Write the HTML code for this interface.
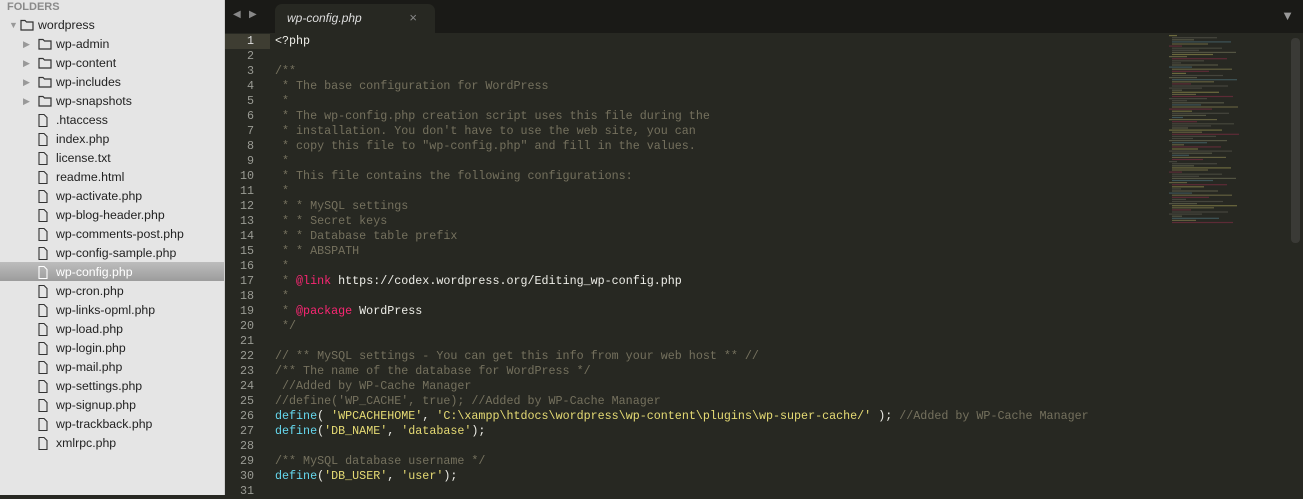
<!DOCTYPE html>
<html><head><meta charset="utf-8"><style>
*{margin:0;padding:0;box-sizing:border-box}
body{width:1303px;height:495px;overflow:hidden;background:#272822;font-family:"Liberation Sans",sans-serif;position:relative}
#side{position:absolute;left:0;top:0;width:225px;height:495px;background:#e5e5e5;border-right:1px solid #cfcfcf}
.hd{position:absolute;left:7px;top:0;font-size:11px;color:#8a8a8a;font-weight:bold;line-height:15px}
.row{position:absolute;left:0;width:224px;height:19px;line-height:19px;font-size:12.3px;color:#222}
.row.sel{background:linear-gradient(#bdbdbd,#9c9c9c);color:#fff}
.row span{position:absolute}
.tri{font-size:9px;color:#999}
#tabbar{position:absolute;left:225px;top:0;width:1078px;height:33px;background:#1a1a17}
#tab{position:absolute;left:50px;top:4px;width:160px;height:29px;background:#272822;border-radius:7px 7px 0 0;color:#ddd;font-style:italic;font-size:12px;line-height:28px;padding-left:12px}
#gut{position:absolute;left:225px;top:33px;width:45px;height:462px}
.ln{position:absolute;right:16px;width:40px;text-align:right;font:11.7px/15px "Liberation Mono",monospace;color:#9a9b94}
#code{position:absolute;left:275px;top:34px;font:11.7px/15px "Liberation Mono",monospace;color:#eeeee8;white-space:pre}
.c{color:#75715e}.k{color:#66d9ef}.s{color:#e6db74}.r{color:#f92672}
#mini{position:absolute;left:1165px;top:33px;width:125px;height:200px;opacity:.45}
#sb{position:absolute;left:1291px;top:38px;width:9px;height:205px;background:#3a3a36;border-radius:4px}
</style></head><body>
<div id="side">
<div class="hd">FOLDERS</div>
</div>
<div id="tabbar">
<span style="position:absolute;left:8px;top:9px;color:#888;font-size:10px">◀</span>
<span style="position:absolute;left:24px;top:9px;color:#888;font-size:10px">▶</span>
<div id="tab">wp-config.php<span style="position:absolute;right:18px;font-style:normal;color:#888;font-size:13px">×</span></div>
<span style="position:absolute;right:9px;top:8px;color:#999;font-size:13px">▼</span>
</div>
<div style="position:absolute;left:225px;top:34px;width:45px;height:15px;background:#3e3d32"></div>
<div id="gut"></div>
<div id="code"></div>
<svg id="mini" viewBox="0 0 125 200"></svg>
<div id="sb"></div>
<script>
var files=[["wordpress",0,2],["wp-admin",1,1],["wp-content",1,1],["wp-includes",1,1],["wp-snapshots",1,1],[".htaccess",1,0],["index.php",1,0],["license.txt",1,0],["readme.html",1,0],["wp-activate.php",1,0],["wp-blog-header.php",1,0],["wp-comments-post.php",1,0],["wp-config-sample.php",1,0],["wp-config.php",1,0],["wp-cron.php",1,0],["wp-links-opml.php",1,0],["wp-load.php",1,0],["wp-login.php",1,0],["wp-mail.php",1,0],["wp-settings.php",1,0],["wp-signup.php",1,0],["wp-trackback.php",1,0],["xmlrpc.php",1,0]];
var sd=document.getElementById('side'),h='';
files.forEach(function(f,i){var y=15+i*19,x=f[1]?38:20;
h+='<div class="row'+(f[0]=="wp-config.php"?' sel':'')+'" style="top:'+y+'px;line-height:20px">';
if(f[2]==2)h+='<span class="tri" style="left:9px">▼</span>';
if(f[2]==1)h+='<span class="tri" style="left:23px">▶</span>';
var ic=f[2]?'<svg width="14" height="12" viewBox="0 0 14 12"><path d="M1 1.5h4l1.5 1.5H13v8H1z" fill="none" stroke="#333" stroke-width="1.2"/></svg>':'<svg width="10" height="13" viewBox="0 0 10 13"><path d="M1 .5h5l3 3v9H1z" fill="none" stroke="'+(f[0]=="wp-config.php"?'#fff':'#333')+'" stroke-width="1.1"/></svg>';
h+='<span style="left:'+x+'px;top:4px;line-height:0">'+ic+'</span><span style="left:'+(x+18)+'px">'+f[0]+'</span></div>';});
sd.innerHTML+=h;
var g='';for(var n=1;n<=31;n++)g+='<div class="ln" style="top:'+((n-1)*15+1)+'px;'+(n==1?'color:#ddd':'')+'">'+n+'</div>';
document.getElementById('gut').innerHTML=g;
var L=['&lt;?php','','<span class="c">/**</span>','<span class="c"> * The base configuration for WordPress</span>','<span class="c"> *</span>','<span class="c"> * The wp-config.php creation script uses this file during the</span>','<span class="c"> * installation. You don\'t have to use the web site, you can</span>','<span class="c"> * copy this file to "wp-config.php" and fill in the values.</span>','<span class="c"> *</span>','<span class="c"> * This file contains the following configurations:</span>','<span class="c"> *</span>','<span class="c"> * * MySQL settings</span>','<span class="c"> * * Secret keys</span>','<span class="c"> * * Database table prefix</span>','<span class="c"> * * ABSPATH</span>','<span class="c"> *</span>','<span class="c"> * </span><span class="r">@link</span> https://codex.wordpress.org/Editing_wp-config.php','<span class="c"> *</span>','<span class="c"> * </span><span class="r">@package</span> WordPress','<span class="c"> */</span>','','<span class="c">// ** MySQL settings - You can get this info from your web host ** //</span>','<span class="c">/** The name of the database for WordPress */</span>','<span class="c"> //Added by WP-Cache Manager</span>','<span class="c">//define(\'WP_CACHE\', true); //Added by WP-Cache Manager</span>','<span class="k">define</span>( <span class="s">\'WPCACHEHOME\'</span>, <span class="s">\'C:\\xampp\\htdocs\\wordpress\\wp-content\\plugins\\wp-super-cache/\'</span> ); <span class="c">//Added by WP-Cache Manager</span>','<span class="k">define</span>(<span class="s">\'DB_NAME\'</span>, <span class="s">\'database\'</span>);','','<span class="c">/** MySQL database username */</span>','<span class="k">define</span>(<span class="s">\'DB_USER\'</span>, <span class="s">\'user\'</span>);',''];
document.getElementById('code').innerHTML=L.join('\n');
var m='',cols=['#6b6a5c','#6b6a5c','#8a8a6a','#5a8a9a','#a8a060','#a03050'];
for(var i=0;i<90;i++){var w=(i*37%60)+8;var c=cols[i%6];if(i%9==0)c='#c0b860';m+='<rect x="'+(4+(i%5==0?0:3))+'" y="'+(2+i*2.1)+'" width="'+w+'" height="1.2" fill="'+c+'"/>';}
document.getElementById('mini').innerHTML=m;
</script>
</body></html>
